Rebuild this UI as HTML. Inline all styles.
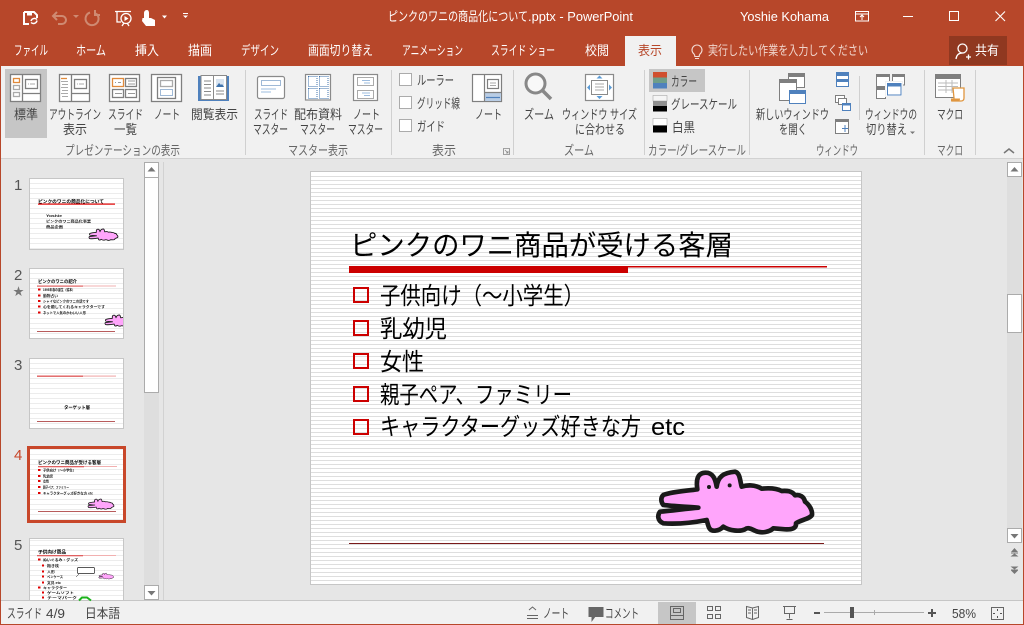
<!DOCTYPE html>
<html lang="ja"><head><meta charset="utf-8"><title>PowerPoint</title>
<style>
html,body{margin:0;padding:0;width:1024px;height:625px;overflow:hidden;background:#e6e6e6}
svg{display:block}
text{font-family:"Liberation Sans","Noto Sans CJK JP",sans-serif;font-size:13px;fill:#444}
text.w{fill:#fff}
.g text{fill:#666}
.s text{font-size:24px;fill:#000}
text.t{font-size:3.2px;fill:#111;font-weight:700}
text.h{font-size:4.6px;fill:#000;font-weight:700}
</style></head><body>
<svg xmlns="http://www.w3.org/2000/svg" width="1024" height="625" viewBox="0 0 1024 625">
<defs>
<pattern id="st" x="0" y="176" width="550" height="4" patternUnits="userSpaceOnUse"><rect width="550" height="1" fill="#dedede"/></pattern>
<pattern id="ts" x="0" y="0" width="95" height="5" patternUnits="userSpaceOnUse"><rect width="95" height="1" fill="#ececec"/></pattern>
<path id="croc" d="M70 105C100 94 140 93 172 88C168 60 172 38 197 38C218 38 226 55 230 80C234 50 250 38 285 35C300 38 300 62 305 80C320 75 345 73 365 86C385 84 410 85 425 93C440 92 455 92 465 106C480 103 492 110 495 125C506 132 518 150 516 165C508 178 480 180 468 190C470 205 455 209 435 208L400 205C390 215 365 222 345 212C335 208 325 200 315 208C300 215 270 213 250 200C245 206 238 211 225 212C205 214 205 195 200 180C165 187 115 193 70 190C52 183 52 165 60 155C95 152 140 146 175 143C140 140 100 139 70 135C62 125 62 112 70 105Z" fill="#ffa5fb" stroke="#1a1a1a" stroke-width="14" stroke-linejoin="round"/>
<clipPath id="c2"><rect x="30" y="269" width="93" height="69"/></clipPath>
<clipPath id="c5"><rect x="30" y="539" width="93" height="61"/></clipPath>
</defs>
<!-- backgrounds -->
<rect width="1024" height="625" fill="#e6e6e6"/>
<rect width="1024" height="66" fill="#b7472a"/>
<rect y="66" width="1024" height="92" fill="#f1f1f1"/>
<rect y="158" width="1024" height="1" fill="#d2d2d2"/>
<rect y="601" width="1024" height="24" fill="#f1f1f1"/>
<rect y="600" width="1024" height="1" fill="#c6c6c6"/>
<rect x="0" y="0" width="1" height="625" fill="#b7472a"/>
<rect x="1023" y="0" width="1" height="625" fill="#b7472a"/>
<rect y="624" width="1024" height="1" fill="#b7472a"/>

<!-- QAT -->
<g fill="none" stroke="#fff" stroke-width="1.600">
<path d="M24 12h10l3 3v3M24 12v12h5" stroke-width="2"/>
<rect x="27" y="12" width="5" height="3.500" fill="#fff" stroke="none"/>
<path d="M31 21a3.600 3.600 0 0 1 6-1.500M37 20.500a3.600 3.600 0 0 1-6 2" stroke-width="1.500"/>
<g stroke="#cf8a72" stroke-width="2">
<path d="M54 16h8a4 4 0 0 1 0 8h-4M57 12l-4 4 4 4"/>
<path d="M90 12.500a6.500 6.500 0 1 0 6 1M95 10v5h5"/>
</g>
<path d="M115 11.500h16M117 12v10h4M124 23l-2 3M127 23l2 3" stroke-width="1.300"/>
<circle cx="126" cy="18.500" r="5" stroke-width="1.300"/>
</g>
<path d="M124.500 16v5l4-2.500z" fill="#fff"/>
<path d="M73 15h6l-3 3z" fill="#cf8a72"/>
<path d="M147 10c-2 0-3 1.500-3 3v5h-1.500l-.5 3 4 5h9v-6l-4-2h-2v-5c0-2-1-3-2-3z" fill="#fff"/>
<path d="M162 15.500h5l-2.500 3z M183 15.500h5l-2.500 2.500z" fill="#fff"/>
<rect x="183" y="13" width="5" height="1" fill="#fff"/>

<!-- Title -->
<text class="w" x="388" y="21" textLength="140" lengthAdjust="spacingAndGlyphs">ピンクのワニの商品化について</text>
<text class="w" x="528" y="21" textLength="105" lengthAdjust="spacingAndGlyphs">.pptx - PowerPoint</text>
<text class="w" x="740" y="21" textLength="89" lengthAdjust="spacingAndGlyphs">Yoshie Kohama</text>
<g fill="none" stroke="#fff" stroke-width="1">
<rect x="855.500" y="11.500" width="13" height="9.500"/><path d="M855.500 14h13M862 20v-5M860 17l2-2 2 2"/>
<path d="M903 16.500h10"/>
<rect x="949.500" y="11.500" width="9" height="9"/>
<path d="M995.500 11.500l9.500 9.500M1005 11.500l-9.500 9.500" stroke-width="1.100"/>
</g>

<!-- Tabs -->
<rect x="625" y="36" width="51" height="30" fill="#f1f1f1"/>
<rect x="949" y="36" width="58" height="29" fill="#903820"/>
<text class="w" x="14" y="55" textLength="34" lengthAdjust="spacingAndGlyphs">ファイル</text>
<text class="w" x="76" y="55" textLength="30" lengthAdjust="spacingAndGlyphs">ホーム</text>
<text class="w" x="135" y="55" textLength="24" lengthAdjust="spacingAndGlyphs">挿入</text>
<text class="w" x="188" y="55" textLength="24" lengthAdjust="spacingAndGlyphs">描画</text>
<text class="w" x="241" y="55" textLength="38" lengthAdjust="spacingAndGlyphs">デザイン</text>
<text class="w" x="308" y="55" textLength="65" lengthAdjust="spacingAndGlyphs">画面切り替え</text>
<text class="w" x="402" y="55" textLength="61" lengthAdjust="spacingAndGlyphs">アニメーション</text>
<text class="w" x="491" y="55" textLength="64" lengthAdjust="spacingAndGlyphs">スライド ショー</text>
<text class="w" x="585" y="55" textLength="24" lengthAdjust="spacingAndGlyphs">校閲</text>
<text x="638" y="55" textLength="24" lengthAdjust="spacingAndGlyphs" style="fill:#b7472a">表示</text>
<text x="708" y="55" textLength="160" lengthAdjust="spacingAndGlyphs" style="fill:#f0d5cc">実行したい作業を入力してください</text>
<text class="w" x="975" y="55" textLength="24" lengthAdjust="spacingAndGlyphs">共有</text>
<g fill="none" stroke="#f3ddd6" stroke-width="1.100">
<path d="M694 54a5 5 0 1 1 6 0c-.7.7-.8 1.500-.8 2.500h-4.400c0-1-.1-1.800-.8-2.500zM695 58.500h4"/>
</g>
<g fill="none" stroke="#fff" stroke-width="1.300">
<circle cx="962.500" cy="48.500" r="4.500"/><path d="M956 59c.5-4 3-6 6.500-6M966 57h5M968.500 54.500v5"/>
</g>

<!-- Ribbon selection -->
<rect x="5" y="69" width="42" height="69" fill="#c6c6c6"/>
<rect x="649" y="69" width="56" height="23" fill="#c6c6c6"/>

<!-- Separators -->
<g fill="#d0d0d0">
<rect x="245" y="70" width="1" height="85"/><rect x="391" y="70" width="1" height="85"/>
<rect x="513" y="70" width="1" height="85"/><rect x="644" y="70" width="1" height="85"/>
<rect x="749" y="70" width="1" height="85"/><rect x="924" y="70" width="1" height="85"/>
<rect x="975" y="70" width="1" height="85"/><rect x="859" y="76" width="1" height="44"/>
</g>

<!-- Ribbon icons: presentation views -->
<g fill="none" stroke="#7f7f7f" stroke-width="1.300">
<rect x="10.500" y="74.500" width="30" height="27" fill="#fff"/>
<path d="M22.500 74.500v27M22.500 93.500h18"/>
<rect x="13.500" y="78.500" width="6" height="4" stroke="#e08a3c"/><rect x="13.500" y="85.500" width="6" height="4" stroke="#aaa"/><rect x="13.500" y="92.500" width="6" height="4" stroke="#aaa"/>
<rect x="25.500" y="79.500" width="12" height="9"/>
<path d="M28 84h1M30 84h5" stroke="#aaa" stroke-width="1"/>
<rect x="59.500" y="74.500" width="30" height="27" fill="#fff"/>
<path d="M71.500 74.500v27M71.500 93.500h18"/>
<rect x="74.500" y="79.500" width="12" height="9"/>
<path d="M77 84h1M79 84h5" stroke="#aaa" stroke-width="1"/>
<path d="M61 78.500h6" stroke="#e08a3c"/>
<path d="M61 81.500h7M62 84.500h6M61 87.500h7M62 90.500h6M61 93.500h7M62 96.500h6" stroke="#aaa" stroke-width="1"/>
<rect x="109.500" y="74.500" width="30" height="27" fill="#fff"/>
<rect x="112.500" y="78.500" width="11" height="8" stroke="#e08a3c"/><rect x="125.500" y="78.500" width="11" height="8"/>
<rect x="112.500" y="89.500" width="11" height="8"/><rect x="125.500" y="89.500" width="11" height="8"/>
<path d="M115 82.500h1M118 82.500h3M128 81h7M128 84h7M115 93.500h7M128 93.500h7" stroke="#999" stroke-width="1"/>
<rect x="151.500" y="74.500" width="30" height="27" fill="#fff"/>
<rect x="157.500" y="77.500" width="18" height="21"/>
<rect x="160.500" y="80.500" width="12" height="6" stroke="#aaa"/>
<rect x="160.500" y="89.500" width="12" height="6" stroke="#3f73ad" stroke-width="1" stroke-dasharray="1 1"/>
</g>
<!-- reading -->
<rect x="198" y="76" width="31" height="25" fill="#4f81bd"/>
<rect x="201" y="75.500" width="12.500" height="24" fill="#fff" stroke="#8a8a8a"/>
<rect x="213.500" y="75.500" width="13" height="24" fill="#fff" stroke="#8a8a8a"/>
<path d="M204 81h7M204 84.500h7M204 88h7M204 91.500h7M204 95h7" stroke="#8a8a8a"/>
<rect x="216" y="79" width="8" height="8" fill="#d9e4f0"/><path d="M216 87l3-4 2 2 1-1 2 3z" fill="#3f73ad"/>
<path d="M216 91h8M216 94h8" stroke="#8a8a8a"/>
<!-- master icons -->
<g fill="none">
<rect x="257.500" y="76.500" width="27" height="22" rx="2" fill="#fff" stroke="#8a8a8a" stroke-width="1.200"/>
<rect x="261.500" y="80.500" width="19" height="5" stroke="#3f73ad" stroke-dasharray="1 1"/>
<path d="M261 89h15M261 92h10" stroke="#9dbcdf"/>
<rect x="305.500" y="74.500" width="25" height="25.500" fill="#fff" stroke="#8a8a8a" stroke-width="1.200"/>
<g stroke="#3f73ad" stroke-dasharray="1 1">
<rect x="308.500" y="76.500" width="8.500" height="10"/><rect x="319.500" y="76.500" width="8.500" height="10"/>
<rect x="308.500" y="88.500" width="8.500" height="10"/><rect x="319.500" y="88.500" width="8.500" height="10"/>
</g>
<rect x="353.500" y="74.500" width="24" height="26" fill="#fff" stroke="#8a8a8a" stroke-width="1.200"/>
<rect x="357.500" y="77.500" width="16" height="8" stroke="#555" stroke-dasharray="1 1"/>
<rect x="357.500" y="90.500" width="16" height="8" stroke="#555" stroke-dasharray="1 1"/>
<path d="M362 80.500h8M364 83h6M362 93h8M364 95.500h6" stroke="#9dbcdf"/>
</g>
<!-- checkboxes -->
<g fill="#fff" stroke="#ababab">
<rect x="399.500" y="73.500" width="12" height="12"/>
<rect x="399.500" y="96.500" width="12" height="12"/>
<rect x="399.500" y="119.500" width="12" height="12"/>
</g>
<!-- notes view -->
<g fill="none" stroke="#7f7f7f" stroke-width="1.200">
<rect x="472.500" y="74.500" width="29" height="27" fill="#fff"/>
<rect x="485" y="93" width="16" height="8" fill="#b9cde5" stroke="none"/>
<path d="M484.500 74.500v27M484.500 92.500h17"/>
<rect x="487.500" y="79.500" width="11" height="9"/>
<path d="M486 97.500h14" stroke="#4f81bd"/>
</g>
<path d="M490 83h6M490 85.500h6" stroke="#aaa" fill="none"/>
<path d="M503.500 148.500h6v6h-6zM505 150l3 3M508 151v2h-2" fill="none" stroke="#888" stroke-width=".8"/>
<!-- zoom -->
<circle cx="535.500" cy="83.500" r="9.500" fill="#f8f8f8" stroke="#888" stroke-width="3"/>
<path d="M542.500 90.500l8.500 8.500" stroke="#888" stroke-width="3.500" fill="none"/>
<!-- fit window -->
<rect x="585.500" y="74.500" width="28" height="26" fill="#fff" stroke="#8a8a8a" stroke-width="1.200"/>
<rect x="591.500" y="80.500" width="16" height="14" fill="none" stroke="#8a8a8a"/>
<path d="M595 84h9M595 87h9M595 90h9" stroke="#aaa"/>
<path d="M599.500 75.500l-3 3h6zM599.500 99l-3-3h6zM587 87.500l3-3v6zM612 87.500l-3-3v6z" fill="#5b9bd5"/>
<!-- colour swatches -->
<rect x="653" y="72" width="14" height="5.500" fill="#d04f2f"/><rect x="653" y="77.500" width="14" height="5.500" fill="#6f9e89"/><rect x="653" y="83" width="14" height="5.500" fill="#4f81bd"/>
<rect x="653" y="95.500" width="14" height="5.500" fill="#f5f5f5" stroke="#999" stroke-width=".5"/><rect x="653" y="101" width="14" height="5.500" fill="#8f8f8f"/><rect x="653" y="106" width="14" height="5.500" fill="#000"/>
<rect x="653" y="118.500" width="14" height="7" fill="#fff" stroke="#999" stroke-width=".5"/><rect x="653" y="125.500" width="14" height="7" fill="#000"/>
<!-- window icons -->
<g stroke="#7f7f7f" fill="#fff">
<rect x="788.500" y="73.500" width="16" height="14"/><rect x="788" y="73" width="17" height="4" fill="#7f7f7f" stroke="none"/>
<rect x="779.500" y="79.500" width="17" height="21"/><rect x="779" y="79" width="18" height="4" fill="#7f7f7f" stroke="none"/>
<rect x="789.500" y="90.500" width="16" height="13" stroke="#4f81bd"/><rect x="789" y="90" width="17" height="4" fill="#4f81bd" stroke="none"/>
<rect x="836.500" y="72.500" width="12" height="14" stroke="#4f81bd"/><rect x="836" y="72" width="13" height="4" fill="#4f81bd" stroke="none"/><rect x="836" y="79" width="13" height="3" fill="#4f81bd" stroke="none"/>
<rect x="835.500" y="95.500" width="9" height="7"/><rect x="838.500" y="98.500" width="8" height="6"/>
<rect x="842.500" y="103.500" width="8" height="7" stroke="#4f81bd"/><rect x="842" y="103" width="9" height="2.500" fill="#4f81bd" stroke="none"/>
<rect x="835.500" y="119.500" width="13" height="14"/><rect x="835" y="119" width="14" height="3" fill="#7f7f7f" stroke="none"/>
<path d="M845 125v7M842 128.500h6" stroke="#4f81bd"/>
<rect x="876.500" y="74.500" width="13" height="12"/><rect x="876" y="74" width="14" height="3" fill="#7f7f7f" stroke="none"/>
<rect x="892.500" y="74.500" width="12" height="10.500"/><rect x="892" y="74" width="13" height="3" fill="#7f7f7f" stroke="none"/>
<rect x="876.500" y="87.500" width="9" height="11"/><rect x="876" y="87" width="10" height="3" fill="#7f7f7f" stroke="none"/>
<rect x="885.500" y="81.500" width="17" height="15" fill="#fff" stroke="#f1f1f1"/>
<rect x="887.500" y="83.500" width="13.500" height="11.500" stroke="#4f81bd"/><rect x="887" y="83" width="14.500" height="3.500" fill="#4f81bd" stroke="none"/>
<!-- macro -->
<rect x="935.500" y="75.500" width="25" height="22"/><rect x="935" y="74" width="26" height="5" fill="#7f7f7f" stroke="none"/>
</g>
<path d="M938 83h20M938 86.500h20M938 90h20M946 80v13M952 80v13" stroke="#bbb" fill="none"/>
<path d="M953 88h11v10c0 2-1 3-3 3h-9c2 0 2-1 2-3z" fill="#fff" stroke="#e0963f" stroke-width="1.300"/><path d="M951 98.500h9c0 2-1 3-2 3h-7z" fill="#e0963f"/>
<path d="M1004 153l5-4 5 4" fill="none" stroke="#777" stroke-width="1.500"/>
<path d="M910 131.500h5l-2.500 2.500z" fill="#777"/>

<!-- Ribbon text -->
<text x="14" y="119" textLength="24" lengthAdjust="spacingAndGlyphs">標準</text>
<text x="49" y="119" textLength="52" lengthAdjust="spacingAndGlyphs">アウトライン</text>
<text x="63" y="134" textLength="24" lengthAdjust="spacingAndGlyphs">表示</text>
<text x="108" y="119" textLength="35" lengthAdjust="spacingAndGlyphs">スライド</text>
<text x="114" y="134" textLength="23" lengthAdjust="spacingAndGlyphs">一覧</text>
<text x="154" y="119" textLength="26" lengthAdjust="spacingAndGlyphs">ノート</text>
<text x="191" y="119" textLength="47" lengthAdjust="spacingAndGlyphs">閲覧表示</text>
<text x="254" y="119" textLength="34" lengthAdjust="spacingAndGlyphs">スライド</text>
<text x="253" y="134" textLength="35" lengthAdjust="spacingAndGlyphs">マスター</text>
<text x="294" y="119" textLength="48" lengthAdjust="spacingAndGlyphs">配布資料</text>
<text x="300" y="134" textLength="35" lengthAdjust="spacingAndGlyphs">マスター</text>
<text x="353" y="119" textLength="27" lengthAdjust="spacingAndGlyphs">ノート</text>
<text x="348" y="134" textLength="35" lengthAdjust="spacingAndGlyphs">マスター</text>
<text x="417" y="85" textLength="37" lengthAdjust="spacingAndGlyphs">ルーラー</text>
<text x="417" y="108" textLength="43" lengthAdjust="spacingAndGlyphs">グリッド線</text>
<text x="417" y="131" textLength="28" lengthAdjust="spacingAndGlyphs">ガイド</text>
<text x="475" y="119" textLength="27" lengthAdjust="spacingAndGlyphs">ノート</text>
<text x="524" y="119" textLength="30" lengthAdjust="spacingAndGlyphs">ズーム</text>
<text x="562" y="119" textLength="75" lengthAdjust="spacingAndGlyphs">ウィンドウ サイズ</text>
<text x="575" y="134" textLength="50" lengthAdjust="spacingAndGlyphs">に合わせる</text>
<text x="671" y="86" textLength="26" lengthAdjust="spacingAndGlyphs">カラー</text>
<text x="671" y="109" textLength="66" lengthAdjust="spacingAndGlyphs">グレースケール</text>
<text x="672" y="132" textLength="23" lengthAdjust="spacingAndGlyphs">白黒</text>
<text x="756" y="119" textLength="73" lengthAdjust="spacingAndGlyphs">新しいウィンドウ</text>
<text x="779" y="134" textLength="28" lengthAdjust="spacingAndGlyphs">を開く</text>
<text x="865" y="119" textLength="52" lengthAdjust="spacingAndGlyphs">ウィンドウの</text>
<text x="866" y="134" textLength="41" lengthAdjust="spacingAndGlyphs">切り替え</text>
<text x="937" y="119" textLength="26" lengthAdjust="spacingAndGlyphs">マクロ</text>
<g class="g">
<text x="65" y="155" textLength="115" lengthAdjust="spacingAndGlyphs">プレゼンテーションの表示</text>
<text x="288" y="155" textLength="60" lengthAdjust="spacingAndGlyphs">マスター表示</text>
<text x="432" y="155" textLength="24" lengthAdjust="spacingAndGlyphs">表示</text>
<text x="564" y="155" textLength="30" lengthAdjust="spacingAndGlyphs">ズーム</text>
<text x="648" y="155" textLength="98" lengthAdjust="spacingAndGlyphs">カラー/グレースケール</text>
<text x="816" y="155" textLength="42" lengthAdjust="spacingAndGlyphs">ウィンドウ</text>
<text x="937" y="155" textLength="26" lengthAdjust="spacingAndGlyphs">マクロ</text>
</g>

<!-- Left pane scrollbar -->
<rect x="144" y="162" width="15" height="438" fill="#dedede"/>
<rect x="144.500" y="162.500" width="14" height="15" fill="#fff" stroke="#ababab"/>
<path d="M147.500 171.500l4-4.500 4 4.500z" fill="#777"/>
<rect x="144.500" y="177.500" width="14" height="215" fill="#fff" stroke="#ababab"/>
<rect x="144.500" y="585.500" width="14" height="14" fill="#fff" stroke="#ababab"/>
<path d="M147.500 591h8l-4 4.500z" fill="#777"/>
<rect x="163" y="162" width="1" height="438" fill="#d2d2d2"/>

<!-- Thumb numbers -->
<text x="14" y="190" style="font-size:15px;fill:#555">1</text>
<text x="14" y="280" style="font-size:15px;fill:#555">2</text>
<text x="13" y="295" style="font-size:11px;fill:#777">★</text>
<text x="14" y="370" style="font-size:15px;fill:#555">3</text>
<text x="14" y="460" style="font-size:15px;fill:#c8472a">4</text>
<text x="14" y="550" style="font-size:15px;fill:#555">5</text>

<!-- Thumbnail 1 -->
<g transform="translate(29,178)">
<rect x=".5" y=".5" width="94" height="71" fill="#fff" stroke="#c6c6c6"/>
<rect x="1" y="1" width="93" height="70" fill="url(#ts)"/>
<text class="h" x="9" y="25" textLength="66" lengthAdjust="spacingAndGlyphs">ピンクのワニの商品化について</text>
<rect x="9" y="25.500" width="77" height="1.200" fill="#e00000"/>
<text class="t" x="17" y="39" textLength="16" lengthAdjust="spacingAndGlyphs">Yoshie</text>
<text class="t" x="17" y="44.500" textLength="45" lengthAdjust="spacingAndGlyphs">ピンクのワニ商品化事業</text>
<text class="t" x="17" y="50" textLength="17" lengthAdjust="spacingAndGlyphs">商品企画</text>
</g>
<use href="#croc" transform="translate(85.600,226.800) scale(.0626)"/>
<!-- Thumbnail 2 -->
<g transform="translate(29,268)">
<rect x=".5" y=".5" width="94" height="70" fill="#fff" stroke="#c6c6c6"/>
<rect x="1" y="1" width="93" height="69" fill="url(#ts)"/>
<text class="h" x="9" y="15" textLength="39" lengthAdjust="spacingAndGlyphs">ピンクのワニの紹介</text>
<rect x="8" y="17.500" width="46" height="1.200" fill="#e06060"/><rect x="54" y="17.500" width="33" height="1" fill="#f2b0b0"/>
<g fill="#e00000"><rect x="9" y="20.500" width="2.500" height="2"/><rect x="9" y="26.500" width="2.500" height="2"/><rect x="9" y="32" width="2.500" height="2"/><rect x="9" y="37.500" width="2.500" height="2"/><rect x="9" y="43.500" width="2.500" height="2"/></g>
<text class="t" x="14" y="23" textLength="32" lengthAdjust="spacingAndGlyphs">1995年春の誕生（絵本）</text>
<text class="t" x="14" y="29" textLength="15" lengthAdjust="spacingAndGlyphs">動物占い</text>
<text class="t" x="14" y="34.500" textLength="46" lengthAdjust="spacingAndGlyphs">シャイなピンクのワニの話です</text>
<text class="t" x="14" y="40" textLength="62" lengthAdjust="spacingAndGlyphs">心を癒してくれるキャラクターです</text>
<text class="t" x="14" y="46" textLength="43" lengthAdjust="spacingAndGlyphs">ネットで人気のかわいい人形</text>
<rect x="8" y="63" width="78" height=".9" fill="#b04a4a"/>
</g>
<g clip-path="url(#c2)"><use href="#croc" transform="translate(101.600,312.800) scale(.0626)"/></g>
<!-- Thumbnail 3 -->
<g transform="translate(29,358)">
<rect x=".5" y=".5" width="94" height="70" fill="#fff" stroke="#c6c6c6"/>
<rect x="1" y="1" width="93" height="69" fill="url(#ts)"/>
<rect x="8" y="17.500" width="46" height="1.400" fill="#e06060"/><rect x="54" y="17.500" width="33" height="1.200" fill="#f2b0b0"/>
<text class="h" x="35" y="51" textLength="26" lengthAdjust="spacingAndGlyphs">ターゲット層</text>
<rect x="8" y="63" width="78" height=".9" fill="#b04a4a"/>
</g>
<!-- Thumbnail 4 -->
<g transform="translate(30,449)">
<rect width="93" height="71" fill="#fff"/>
<rect width="93" height="71" fill="url(#ts)"/>
<text class="h" x="8" y="15" textLength="63" lengthAdjust="spacingAndGlyphs">ピンクのワニ商品が受ける客層</text>
<rect x="8" y="17" width="46" height="1.300" fill="#e06060"/><rect x="54" y="17" width="33" height="1" fill="#f2b0b0"/>
<g fill="#e00000"><rect x="8" y="20" width="2.500" height="2"/><rect x="8" y="26" width="2.500" height="2"/><rect x="8" y="31" width="2.500" height="2"/><rect x="8" y="37" width="2.500" height="2"/><rect x="8" y="43" width="2.500" height="2"/></g>
<text class="t" x="13" y="22.500" textLength="33" lengthAdjust="spacingAndGlyphs">子供向け（〜小学生）</text>
<text class="t" x="13" y="28.500" textLength="10" lengthAdjust="spacingAndGlyphs">乳幼児</text>
<text class="t" x="13" y="33.500" textLength="6" lengthAdjust="spacingAndGlyphs">女性</text>
<text class="t" x="13" y="39.500" textLength="26" lengthAdjust="spacingAndGlyphs">親子ペア、ファミリー</text>
<text class="t" x="13" y="45.500" textLength="50" lengthAdjust="spacingAndGlyphs">キャラクターグッズ好きな方 etc</text>
<rect x="8" y="62" width="78" height=".9" fill="#b04a4a"/>
</g>
<use href="#croc" transform="translate(85,497) scale(.056)"/>
<rect x="28.500" y="447.500" width="96" height="74" fill="none" stroke="#c8472a" stroke-width="3"/>
<!-- Thumbnail 5 -->
<rect x="29.500" y="538.500" width="94" height="62" fill="#fff" stroke="#c6c6c6"/>
<rect x="30" y="539" width="93" height="61" fill="url(#ts)"/>
<g transform="translate(29,538)">
<text class="h" x="9" y="15.500" textLength="28" lengthAdjust="spacingAndGlyphs">子供向け商品</text>
<rect x="8" y="17" width="46" height="1.300" fill="#e06060"/><rect x="54" y="17" width="33" height="1" fill="#f2b0b0"/>
<g fill="#e00000"><rect x="9" y="20.500" width="2.500" height="2"/><rect x="13" y="26.500" width="2" height="2"/><rect x="13" y="32.500" width="2" height="2"/><rect x="13" y="37.500" width="2" height="2"/><rect x="13" y="43.500" width="2" height="2"/><rect x="9" y="48.500" width="2.500" height="2"/><rect x="13" y="53.500" width="2" height="2"/><rect x="13" y="58.500" width="2" height="2"/></g>
<text class="t" x="14" y="23" textLength="35" lengthAdjust="spacingAndGlyphs">ぬいぐるみ・グッズ</text>
<text class="t" x="18" y="29" textLength="12" lengthAdjust="spacingAndGlyphs">抱き枕</text>
<text class="t" x="18" y="35" textLength="8" lengthAdjust="spacingAndGlyphs">人形</text>
<text class="t" x="18" y="40" textLength="16" lengthAdjust="spacingAndGlyphs">ペンケース</text>
<text class="t" x="18" y="46" textLength="14" lengthAdjust="spacingAndGlyphs">文具 etc</text>
<text class="t" x="14" y="51" textLength="24" lengthAdjust="spacingAndGlyphs">キャラクター</text>
<text class="t" x="18" y="56" textLength="27" lengthAdjust="spacingAndGlyphs">ゲームソフト</text>
<text class="t" x="18" y="61" textLength="30" lengthAdjust="spacingAndGlyphs">テーマパーク</text>
<rect x="48.500" y="29.500" width="17" height="6" rx="1" fill="#fff" stroke="#222" stroke-width=".7"/>
<path d="M50 36l-3 3" stroke="#222" stroke-width=".5"/>
<path d="M50 62.500l3-3h5l4 3" fill="none" stroke="#1db31d" stroke-width="2"/>
</g>
<g clip-path="url(#c5)"><use href="#croc" transform="translate(97,572) scale(.0324)"/></g>

<!-- Right scrollbar -->
<rect x="1007" y="162" width="15" height="366" fill="#dedede"/>
<rect x="1007.500" y="162.500" width="14" height="14" fill="#fff" stroke="#ababab"/>
<path d="M1010.500 171.500l4-4.500 4 4.500z" fill="#777"/>
<rect x="1007.500" y="294.500" width="14" height="38" fill="#fff" stroke="#ababab"/>
<rect x="1007.500" y="528.500" width="14" height="14" fill="#fff" stroke="#ababab"/>
<path d="M1010.500 534h8l-4 4.500z" fill="#777"/>
<path d="M1011 552l3.500-4 3.500 4zM1011 552.500h7v1h-7zM1010.500 556.500l4-3 4 3z" fill="#777"/>
<path d="M1010.500 566.500l4 3 4-3zM1011 569.500h7v1h-7zM1011 570.500h7l-3.500 3.500z" fill="#777"/>

<!-- Slide -->
<rect x="310.500" y="171.500" width="551" height="413" fill="#fff" stroke="#c6c6c6"/>
<rect x="311" y="176" width="550" height="408" fill="url(#st)"/>
<g class="s">
<text x="350" y="255" textLength="383" lengthAdjust="spacingAndGlyphs" style="font-size:28px;fill:#000">ピンクのワニ商品が受ける客層</text>
<text x="380" y="304" textLength="204" lengthAdjust="spacingAndGlyphs">子供向け（〜小学生）</text>
<text x="380" y="337" textLength="67" lengthAdjust="spacingAndGlyphs">乳幼児</text>
<text x="380" y="370" textLength="44" lengthAdjust="spacingAndGlyphs">女性</text>
<text x="380" y="403" textLength="192" lengthAdjust="spacingAndGlyphs">親子ペア、ファミリー</text>
<text x="380" y="435" textLength="261" lengthAdjust="spacingAndGlyphs">キャラクターグッズ好きな方</text>
<text x="651" y="435" textLength="34" lengthAdjust="spacingAndGlyphs">etc</text>
</g>
<rect x="349" y="266" width="279" height="7" fill="#cc0000"/>
<rect x="628" y="266" width="199" height="1.500" fill="#cc0000"/>
<g fill="none" stroke="#cc0000" stroke-width="2">
<rect x="354" y="288" width="14" height="14"/>
<rect x="354" y="321" width="14" height="14"/>
<rect x="354" y="354" width="14" height="14"/>
<rect x="354" y="387" width="14" height="14"/>
<rect x="354" y="420" width="14" height="14"/>
</g>
<!-- Croc -->
<g transform="translate(640,460) scale(.3333)">
<use href="#croc"/>
<circle cx="207" cy="81" r="6" fill="#1a1a1a"/><circle cx="269" cy="76" r="6" fill="#1a1a1a"/>
</g>
<rect x="349" y="543" width="475" height="1" fill="#7a1a1a"/>

<!-- Status bar -->
<text x="7" y="618" textLength="35" lengthAdjust="spacingAndGlyphs">スライド</text>
<text x="46" y="618" textLength="19" lengthAdjust="spacingAndGlyphs">4/9</text>
<text x="85" y="618" textLength="35" lengthAdjust="spacingAndGlyphs">日本語</text>
<rect x="658" y="602" width="38" height="22" fill="#c6c6c6"/>
<g fill="none" stroke="#666" stroke-width="1">
<path d="M527 615.500h11M527 618.500h11M529 610l3.500-3 3.500 3"/>
<path d="M589 607.500h14v9h-8l-3 4v-4h-3z" fill="#666"/>
<rect x="670.500" y="606.500" width="13" height="13"/><rect x="673.500" y="608.500" width="7" height="4"/><path d="M670.500 615.500h13"/>
<rect x="707.500" y="606.500" width="5" height="4"/><rect x="715.500" y="606.500" width="5" height="4"/><rect x="707.500" y="614.500" width="5" height="4"/><rect x="715.500" y="614.500" width="5" height="4"/>
<path d="M746.500 606.500l6 1.500 6-1.500v11l-6 2-6-2zM752.500 608v11M748 610h3M748 613h3M754 610h3M754 613h3"/>
<path d="M783 606.500h13M784.500 607v6.500h10V607M789.500 613.500v5M786.500 619.500h6"/>
<rect x="991.500" y="607.500" width="12" height="12"/>
<path d="M997.500 609v2M997.500 616v2M993 613.500h2M1000 613.500h2" stroke="#555"/>
</g>
<text x="543" y="618" textLength="26" lengthAdjust="spacingAndGlyphs">ノート</text>
<text x="605" y="618" textLength="34" lengthAdjust="spacingAndGlyphs">コメント</text>
<rect x="814" y="612" width="6" height="2" fill="#555"/>
<rect x="824" y="612" width="100" height="1" fill="#aaa"/>
<rect x="874" y="610" width="1" height="5" fill="#aaa"/>
<rect x="850" y="607" width="4" height="11" fill="#555"/>
<path d="M928 612h8v2h-8zM931 609h2v8h-2z" fill="#555"/>
<text x="952" y="618" textLength="24" lengthAdjust="spacingAndGlyphs">58%</text>
</svg>
</body></html>
